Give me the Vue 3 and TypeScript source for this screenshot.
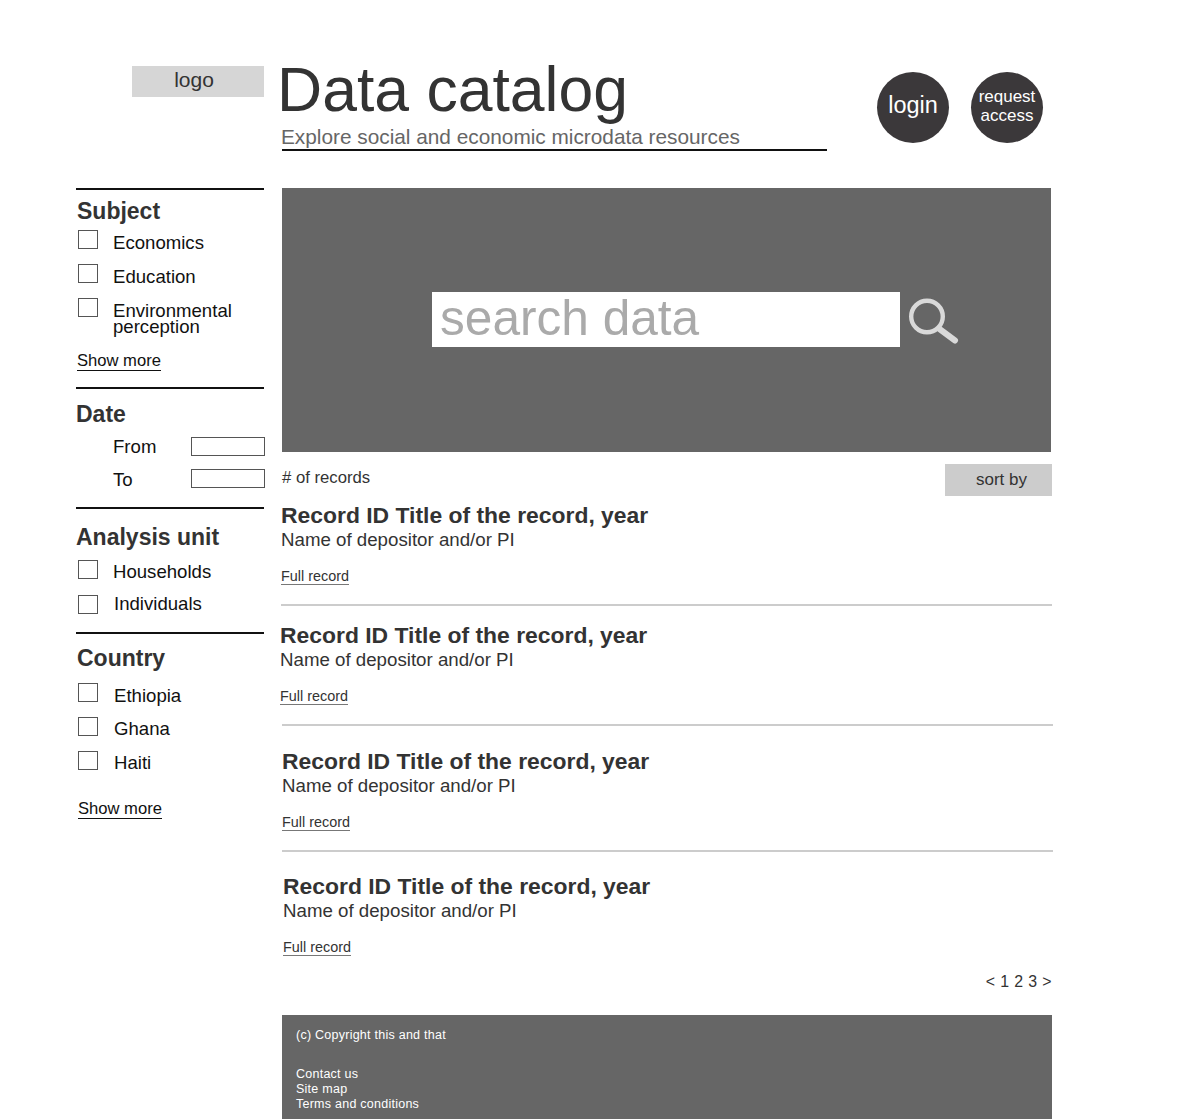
<script setup lang="ts">
interface FilterGroup {
  title: string;
  options: string[];
  showMore?: boolean;
}

const subject: FilterGroup = {
  title: 'Subject',
  options: ['Economics', 'Education', 'Environmental perception'],
  showMore: true,
};
const units: FilterGroup = { title: 'Analysis unit', options: ['Households', 'Individuals'] };
const countries: FilterGroup = {
  title: 'Country',
  options: ['Ethiopia', 'Ghana', 'Haiti'],
  showMore: true,
};

// the wireframe rows are hand placed, so each one sits a little differently
const records = [
  { id: 1, shift: -1, top: 0, last: false },
  { id: 2, shift: -3, top: 17, last: false },
  { id: 3, shift: -1, top: 23, last: false },
  { id: 4, shift: 0, top: 22, last: true },
];
</script>

<template>
  <div class="page">
    <header class="header">
      <div class="logo">logo</div>
      <div class="brand">
        <h1 class="brand__title">Data catalog</h1>
        <p class="brand__sub">Explore social and economic microdata resources</p>
      </div>
      <nav class="header__actions">
        <button type="button" class="circle circle--login">login</button>
        <button type="button" class="circle circle--request">request<br />access</button>
      </nav>
    </header>

    <div class="layout">
      <aside class="sidebar">
        <section class="filter filter--subject">
          <h2 class="filter__title">{{ subject.title }}</h2>
          <label v-for="o in subject.options" :key="o" class="check">
            <input type="checkbox" class="check__box" />
            <span class="check__label">{{ o }}</span>
          </label>
          <a class="show-more" href="#">Show more</a>
        </section>

        <section class="filter filter--date">
          <h2 class="filter__title filter__title--left">Date</h2>
          <div class="date-row">
            <span>From</span>
            <input type="text" class="date-row__input" />
          </div>
          <div class="date-row">
            <span>To</span>
            <input type="text" class="date-row__input" />
          </div>
        </section>

        <section class="filter filter--units">
          <h2 class="filter__title filter__title--left">{{ units.title }}</h2>
          <label v-for="o in units.options" :key="o" class="check">
            <input type="checkbox" class="check__box" />
            <span class="check__label">{{ o }}</span>
          </label>
        </section>

        <section class="filter filter--country">
          <h2 class="filter__title">{{ countries.title }}</h2>
          <label v-for="o in countries.options" :key="o" class="check">
            <input type="checkbox" class="check__box" />
            <span class="check__label">{{ o }}</span>
          </label>
          <a class="show-more show-more--country" href="#">Show more</a>
        </section>
      </aside>

      <main class="main">
        <div class="search">
          <div class="search__box">search data</div>
          <svg class="search__icon" width="52" height="48" viewBox="0 0 52 48" aria-hidden="true">
            <circle cx="19" cy="18.5" r="15.8" fill="none" stroke="#d9d9d9" stroke-width="4.4" />
            <path d="M31.5 31 L47 42.5" fill="none" stroke="#d9d9d9" stroke-width="6" stroke-linecap="round" />
          </svg>
        </div>

        <div class="toolbar">
          <span class="toolbar__count"># of records</span>
          <button type="button" class="toolbar__sort">sort by</button>
        </div>

        <article
          v-for="r in records"
          :key="r.id"
          class="record"
          :class="{ 'record--last': r.last }"
          :style="{ marginTop: r.top + 'px' }"
        >
          <div class="record__text" :style="{ marginLeft: r.shift + 'px' }">
            <h3 class="record__title">Record ID Title of the record, year</h3>
            <p class="record__author">Name of depositor and/or PI</p>
            <a class="record__link" href="#">Full record</a>
          </div>
        </article>

        <div class="pager">&lt; 1 2 3 &gt;</div>

        <footer class="footer">
          <p class="footer__copy">(c) Copyright this and that</p>
          <a href="#">Contact us</a>
          <a href="#">Site map</a>
          <a href="#">Terms and conditions</a>
        </footer>
      </main>
    </div>
  </div>
</template>

<style>
html,
body {
  margin: 0;
  background: #fff;
}
</style>

<style scoped>
.page {
  width: 1200px;
  height: 1119px;
  overflow: hidden;
  padding-left: 76px;
  box-sizing: border-box;
  font-family: 'Liberation Sans', Arial, sans-serif;
  color: #333;
}

.header {
  display: flex;
  height: 188px;
}

.logo {
  width: 124px;
  height: 31px;
  margin: 66px 0 0 56px;
  padding-right: 8px;
  background: #d6d6d6;
  font-size: 21px;
  line-height: 28px;
  text-align: center;
}

.brand {
  width: 550px;
  margin-left: 13px;
}

.brand__title {
  margin: 57px 0 0;
  font-size: 62.5px;
  font-weight: 400;
  line-height: 64px;
}

.brand__sub {
  margin: 3px 0 0 5px;
  height: 25px;
  border-bottom: 2px solid #111;
  color: #666;
  font-size: 20.8px;
  line-height: 26px;
  white-space: nowrap;
  text-indent: -1px;
}

.header__actions {
  display: flex;
  gap: 22px;
  margin: 72px 0 0 50px;
}

.circle {
  width: 72px;
  height: 71px;
  padding: 0;
  border: 0;
  border-radius: 50%;
  background: #3b383a;
  color: #fff;
  font-family: inherit;
  cursor: pointer;
}

.circle--login {
  padding-bottom: 5px;
  font-size: 23.5px;
}

.circle--request {
  padding-bottom: 4px;
  font-size: 17px;
  line-height: 19px;
}

.layout {
  display: flex;
  gap: 18px;
  align-items: flex-start;
}

.sidebar {
  width: 188px;
  flex-shrink: 0;
}

.filter {
  border-top: 2px solid #111;
}

.filter--subject {
  height: 197px;
}

.filter--date {
  height: 118px;
}

.filter--units {
  height: 123px;
}

.filter__title {
  margin: 0;
  padding-left: 1px;
  color: #333;
  font-size: 23px;
  font-weight: 700;
  line-height: 28px;
}

.filter--subject .filter__title {
  margin-top: 7px;
}

.filter--date .filter__title {
  margin-top: 11px;
  margin-bottom: 2px;
}

.filter--units .filter__title {
  margin-top: 14px;
  margin-bottom: 9px;
}

.filter--country .filter__title {
  margin-top: 10px;
  margin-bottom: 11px;
}

.filter__title--left {
  padding-left: 0;
}

.check {
  display: flex;
  align-items: flex-start;
  min-height: 34px;
  padding-left: 2px;
  color: #111;
  font-size: 18.6px;
  line-height: 17px;
}

.check__box {
  appearance: none;
  width: 20px;
  height: 19px;
  margin: 0;
  box-sizing: border-box;
  flex-shrink: 0;
  border: 1px solid #555;
  background: #fff;
}

.check__label {
  margin: 5px 0 0 15px;
  max-width: 130px;
  line-height: 16px;
}

.filter--subject .check:first-of-type {
  margin-top: 5px;
}

.filter--units .check:first-of-type {
  min-height: 35px;
}

.filter--units .check:first-of-type .check__label {
  margin-top: 4px;
}

.filter--units .check:nth-of-type(2) .check__label {
  margin: 1px 0 0 16px;
}

.filter--country .check__label {
  margin-left: 16px;
}

.filter--country .check:nth-of-type(2) .check__label,
.filter--country .check:nth-of-type(3) .check__label {
  margin-top: 4px;
}

.show-more {
  display: inline-block;
  margin: 17px 0 0 1px;
  border-bottom: 1px solid #111;
  color: #111;
  font-size: 16.6px;
  line-height: 18px;
  text-decoration: none;
}

.show-more--country {
  margin: 15px 0 0 2px;
}

.date-row {
  display: flex;
  align-items: center;
  justify-content: space-between;
  width: 189px;
  height: 33px;
  padding-left: 37px;
  box-sizing: border-box;
  color: #111;
  font-size: 18.6px;
}

.date-row__input {
  width: 74px;
  height: 19px;
  margin: 0;
  padding: 0;
  box-sizing: border-box;
  border: 1px solid #555;
  background: #fff;
}

.date-row + .date-row .date-row__input {
  margin-top: -2px;
}

.main {
  width: 770px;
}

.search {
  display: flex;
  align-items: center;
  width: 769px;
  height: 264px;
  padding-left: 150px;
  box-sizing: border-box;
  background: #666;
}

.search__box {
  width: 468px;
  height: 55px;
  margin-bottom: 2px;
  padding-left: 8px;
  box-sizing: border-box;
  background: #fff;
  color: #aaa;
  font-size: 49.6px;
  line-height: 52px;
}

.search__icon {
  margin: 3px 0 0 8px;
}

.toolbar {
  display: flex;
  justify-content: space-between;
  align-items: flex-start;
  height: 39px;
  margin-top: 12px;
}

.toolbar__count {
  margin-top: 4px;
  font-size: 16.7px;
  line-height: 20px;
}

.toolbar__sort {
  width: 107px;
  height: 32px;
  padding: 0 0 0 6px;
  border: 0;
  background: #ccc;
  color: #333;
  font-family: inherit;
  font-size: 17px;
}

.record {
  width: 771px;
  height: 103px;
  margin-left: -1px;
  box-sizing: border-box;
  border-bottom: 2px solid #ccc;
  padding-left: 1px;
}

.record:nth-of-type(n + 2) {
  margin-left: 0;
}

.record--last {
  border-bottom: 0;
}

.record__title {
  margin: 0;
  padding-bottom: 2px;
  color: #333;
  font-size: 22.9px;
  font-weight: 700;
  line-height: 24px;
}

.record__author {
  margin: 0;
  color: #333;
  font-size: 18.7px;
  line-height: 22px;
}

.record__link {
  display: inline-block;
  margin-top: 17px;
  border-bottom: 1px solid #777;
  color: #333;
  font-size: 14.4px;
  line-height: 16px;
  text-decoration: none;
}

.pager {
  margin-top: -5px;
  color: #333;
  font-size: 15.9px;
  line-height: 20px;
  text-align: right;
  letter-spacing: 0.4px;
}

.footer {
  display: flex;
  flex-direction: column;
  height: 104px;
  margin-top: 23px;
  padding: 13px 14px 0;
  box-sizing: border-box;
  background: #666;
  color: #fff;
  font-size: 12.5px;
  line-height: 15px;
  letter-spacing: 0.25px;
}

.footer__copy {
  margin: 0 0 24px;
}

.footer a {
  color: #fff;
  text-decoration: none;
}
</style>
